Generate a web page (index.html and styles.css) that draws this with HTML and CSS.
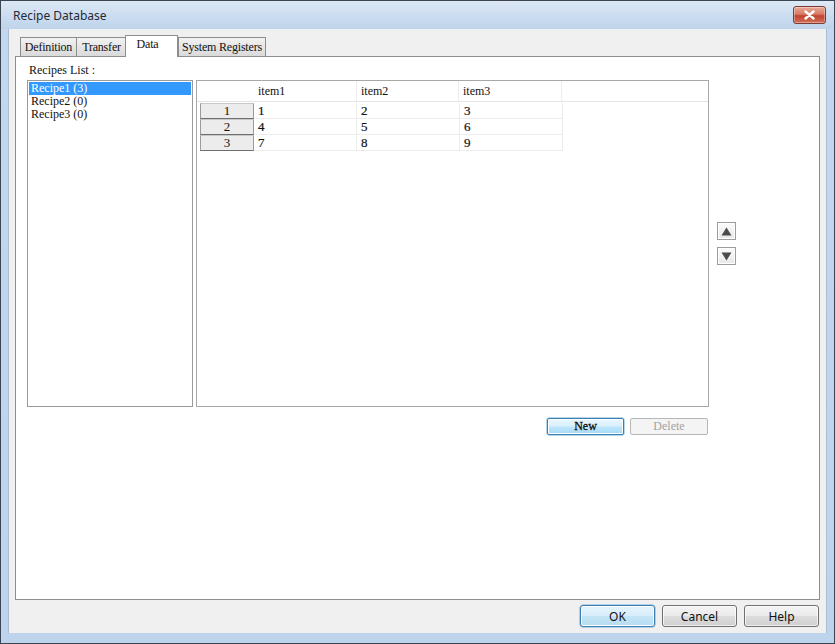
FILE: index.html
```html
<!DOCTYPE html>
<html>
<head>
<meta charset="utf-8">
<title>Recipe Database</title>
<link rel="stylesheet" href="styles.css">
</head>
<body>
<div class="window">
  <div class="titlebar">
    <span class="title">Recipe Database</span>
    <div class="close">
      <svg width="11" height="10" viewBox="0 0 11 10"><path d="M1.5 1.5 L9.5 8.5 M9.5 1.5 L1.5 8.5" stroke="#fff" stroke-width="2.4" stroke-linecap="round"/></svg>
    </div>
  </div>
  <div class="client">
    <div class="tabs">
      <div class="tab t1">Definition</div>
      <div class="tab t2">Transfer</div>
      <div class="tab active">Data</div>
      <div class="tab t4">System Registers</div>
    </div>
    <div class="panel">
      <div class="label">Recipes List :</div>
      <div class="main">
        <div class="listbox">
          <div class="item selected">Recipe1 (3)</div>
          <div class="item">Recipe2 (0)</div>
          <div class="item">Recipe3 (0)</div>
        </div>
        <div class="grid">
          <div class="ghead">
            <div class="corner"></div>
            <div class="hc">item1</div>
            <div class="hc w2">item2</div>
            <div class="hc">item3</div>
            <div class="hfill"></div>
          </div>
          <div class="grow">
            <div class="rh">1</div><div class="c">1</div><div class="c w2">2</div><div class="c">3</div>
          </div>
          <div class="grow">
            <div class="rh">2</div><div class="c">4</div><div class="c w2">5</div><div class="c">6</div>
          </div>
          <div class="grow">
            <div class="rh">3</div><div class="c">7</div><div class="c w2">8</div><div class="c">9</div>
          </div>
        </div>
        <div class="arrows">
          <div class="arrow"><svg width="11" height="9" viewBox="0 0 11 9"><path d="M5.5 0.5 L10.5 8.5 L0.5 8.5 Z" fill="#4a4a4a"/></svg></div>
          <div class="arrow"><svg width="11" height="9" viewBox="0 0 11 9"><path d="M0.5 0.5 L10.5 0.5 L5.5 8.5 Z" fill="#4a4a4a"/></svg></div>
        </div>
      </div>
      <div class="actions">
        <div class="btn serif default new">New</div>
        <div class="btn serif disabled del">Delete</div>
      </div>
    </div>
    <div class="footer">
      <div class="btn default">OK</div>
      <div class="btn">Cancel</div>
      <div class="btn">Help</div>
    </div>
  </div>
</div>
</body>
</html>
```

FILE: styles.css
```css
* { box-sizing: border-box; }
html, body { margin: 0; padding: 0; }
body { width: 835px; height: 644px; overflow: hidden; background: #fff; }

.window {
  width: 835px;
  height: 644px;
  border: 1px solid #3c4652;
  background: linear-gradient(180deg, #cfdff1 0%, #c3d7ee 5%, #bed4ec 100%);
  display: flex;
  flex-direction: column;
  font-family: "Noto Sans", "Open Sans", sans-serif;
}

.titlebar {
  height: 28px;
  display: flex;
  align-items: center;
  justify-content: space-between;
  padding: 0 8px 2px 12px;
  background: linear-gradient(180deg, #dde8f5 0%, #c9dbef 60%, #bfd4eb 100%);
}
.title {
  font-family: "Noto Sans", "Open Sans", sans-serif;
  font-size: 12px;
  color: #1e2a38;
  padding-top: 2px;
}
.close {
  width: 33px;
  height: 18px;
  margin-top: 1px;
  border: 1px solid #7c3a31;
  border-radius: 3px;
  background: linear-gradient(180deg, #e9a99a 0%, #d77a65 45%, #c2432e 55%, #d0705a 100%);
  display: flex;
  align-items: center;
  justify-content: center;
  box-shadow: inset 0 0 0 1px rgba(255,255,255,0.35);
}

.client {
  height: 604px;
  margin: 0 7px;
  background: #f0f0f0;
  display: flex;
  flex-direction: column;
  border-left: 1px solid #a9bdd3;
  border-right: 1px solid #a9bdd3;
}

.tabs {
  height: 27px;
  display: flex;
  align-items: flex-end;
  padding-left: 11px;
  font-family: "Liberation Serif", "Times New Roman", serif;
  font-size: 12px;
  letter-spacing: -0.2px;
  position: relative;
  z-index: 1;
}
.tab {
  height: 19px;
  padding: 0;
  border: 1px solid #8d8d8d;
  border-bottom: none;
  margin-right: -1px;
  background: linear-gradient(180deg, #f2f2f2 0%, #e6e6e6 50%, #dadada 100%);
  color: #111;
  line-height: 18px;
  text-align: center;
  white-space: nowrap;
}
.tab.t1 { width: 57px; }
.tab.t2 { width: 51px; }
.tab.active {
  width: 53px;
  height: 22px;
  background: #fff;
  margin-bottom: -1px;
  line-height: 16px;
  margin-left: -1px;
  margin-right: 0;
  padding-right: 8px;
}
.tab.t4 { width: 88px; }

.panel {
  height: 544px;
  margin: 0 6px 0 6px;
  border: 1px solid #8d8d8d;
  background: #fff;
  padding: 6px 0 0 11px;
  font-family: "Liberation Serif", "Times New Roman", serif;
  font-size: 12px;
  color: #111;
}
.label {
  height: 17px;
  padding-left: 2px;
  line-height: 14px;
}
.main {
  display: flex;
  align-items: flex-start;
}
.listbox {
  width: 166px;
  height: 327px;
  border: 1px solid #9a9a9a;
  padding: 1px;
}
.item {
  height: 13px;
  line-height: 13px;
  padding-left: 2px;
  white-space: nowrap;
}
.item.selected {
  background: #3399ff;
  color: #fff;
}

.grid {
  width: 513px;
  height: 327px;
  margin-left: 3px;
  border: 1px solid #a8a8a8;
  background: #fff;
}
.ghead {
  display: flex;
  height: 21px;
  border-bottom: 1px solid #e4e4e4;
  margin-bottom: 1px;
}
.corner { width: 57px; }
.hc {
  width: 103px;
  border-right: 1px solid #ececec;
  padding-left: 4px;
  line-height: 20px;
}
.w2 { width: 102px; }
.hfill { flex: 1; }
.grow {
  display: flex;
  height: 16px;
}
.rh {
  width: 54px;
  margin-left: 3px;
  background: #ececec;
  border: 1px solid #9c9c9c;
  border-top-color: #c8c8c8;
  border-bottom-color: #6f6f6f;
  text-align: center;
  line-height: 14px;
  font-size: 13px;
}
.c {
  width: 103px;
  padding-left: 4px;
  border-right: 1px solid #ececec;
  border-bottom: 1px solid #ececec;
  line-height: 15px;
  font-size: 13px;
  -webkit-text-stroke: 0.2px #111;
}

.arrows {
  margin-left: 8px;
  padding-top: 142px;
  display: flex;
  flex-direction: column;
  gap: 7px;
}
.arrow {
  width: 19px;
  height: 18px;
  border: 1px solid #9c9c9c;
  background: linear-gradient(180deg, #fbfbfb 0%, #e8e8e8 100%);
  display: flex;
  align-items: center;
  justify-content: center;
  box-shadow: inset 0 0 0 1px #fff;
}

.actions {
  width: 681px;
  display: flex;
  justify-content: flex-end;
  gap: 6px;
  margin-top: 11px;
}

.btn {
  width: 75px;
  height: 22px;
  border: 1px solid #707070;
  border-radius: 3px;
  background: linear-gradient(180deg, #f4f4f4 0%, #ebebeb 48%, #dddddd 52%, #cfcfcf 100%);
  box-shadow: inset 0 0 0 1px rgba(255,255,255,0.7);
  display: flex;
  align-items: center;
  justify-content: center;
  font-family: "Noto Sans", "Open Sans", sans-serif;
  font-size: 12px;
  color: #111;
}
.btn.default {
  border-color: #3c7fb1;
  background: linear-gradient(180deg, #eaf6fd 0%, #d9f0fc 48%, #bee6fd 52%, #a7d9f5 100%);
  box-shadow: inset 0 0 0 1px #fff, 0 0 0 0.5px #6fb0d8;
}
.btn.serif {
  font-family: "Liberation Serif", "Times New Roman", serif;
  height: 17px;
  border-radius: 2px;
}
.btn.new { width: 77px; -webkit-text-stroke: 0.3px #111; }
.btn.del { width: 78px; }
.btn.disabled {
  border-color: #b5b8bb;
  background: #f4f4f4;
  color: #a3a3a3;
  box-shadow: none;
}

.footer {
  display: flex;
  justify-content: flex-end;
  gap: 7px;
  padding: 5px 7px 0 0;
}
.footer .btn.default {
  background: linear-gradient(180deg, #e5f4fc 0%, #d8eefa 48%, #c4e5f6 52%, #b6dcf1 100%);
}
```
